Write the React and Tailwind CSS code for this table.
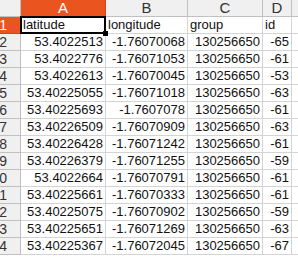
import React from 'react';

const rows = [
    ['53.4022513', '-1.76070068', '130256650', '-65'],
    ['53.4022776', '-1.76071053', '130256650', '-61'],
    ['53.4022613', '-1.76070045', '130256650', '-53'],
    ['53.40225055', '-1.76071018', '130256650', '-63'],
    ['53.40225693', '-1.7607078', '130256650', '-61'],
    ['53.40226509', '-1.76070909', '130256650', '-63'],
    ['53.40226428', '-1.76071242', '130256650', '-61'],
    ['53.40226379', '-1.76071255', '130256650', '-59'],
    ['53.4022664', '-1.76070791', '130256650', '-61'],
    ['53.40225661', '-1.76070333', '130256650', '-61'],
    ['53.40225075', '-1.76070902', '130256650', '-59'],
    ['53.40225651', '-1.76071269', '130256650', '-63'],
    ['53.40225367', '-1.76072045', '130256650', '-67'],
];

const widths = ['w-[85px]', 'w-[82px]', 'w-[75px]', 'w-[29px]'];

const RowHeader = ({ n, active }) => (
    <div className={`w-[21px] shrink-0 h-full overflow-hidden flex justify-end items-center pr-[13px] border-r border-b ${active ? 'bg-[#e9541f] text-white border-[#c94a1b]' : 'bg-[#f0f0f0] text-[#333] border-[#c0c0c0]'}`}>
        <span className="text-[14px] leading-none">{n}</span>
    </div>
);

const App = () => {
    return (
        <div className="w-[298px] h-[258px] overflow-hidden bg-white text-[13px] text-[#111]" style={{ fontFamily: '"Liberation Sans", Arial, sans-serif' }}>
            {/* column headers */}
            <div className="flex h-[17px]">
                <div className="w-[21px] shrink-0 bg-[#f0f0f0] border-r border-b border-[#c0c0c0]" />
                {['A', 'B', 'C', 'D'].map((c, i) => (
                    <div
                        key={c}
                        className={`${widths[i]} shrink-0 flex items-center justify-center border-r border-b text-[15px] ${i === 0 ? 'bg-[#e9541f] text-white border-[#c94a1b]' : 'bg-[#f0f0f0] text-[#333] border-[#c0c0c0]'}`}
                    >
                        {c}
                    </div>
                ))}
                <div className="flex-1 bg-[#f0f0f0] border-b border-[#c0c0c0]" />
            </div>

            {/* row 1: labels */}
            <div className="flex h-[17px]">
                <RowHeader n="1" active />
                <div className="w-[85px] shrink-0 relative border-r border-b border-[#d4d4d4] flex items-center pl-[2px]">
                    latitude
                    <div className="absolute -left-px -top-px -right-px -bottom-px border-2 border-black" />
                    <div className="absolute -right-[3px] -bottom-[3px] w-[5px] h-[5px] bg-black" />
                </div>
                {['longitude', 'group', 'id'].map((t, i) => (
                    <div key={t} className={`${widths[i + 1]} shrink-0 border-r border-b border-[#d4d4d4] flex items-center pl-[2px] overflow-hidden whitespace-nowrap`}>
                        {t}
                    </div>
                ))}
                <div className="flex-1 border-b border-[#d4d4d4]" />
            </div>

            {rows.map((r, ri) => (
                <div key={ri} className="flex h-[17px]">
                    <RowHeader n={ri + 2} />
                    {r.map((v, i) => (
                        <div key={i} className={`${widths[i]} shrink-0 border-r border-b border-[#d4d4d4] flex items-center justify-end pr-[2px] overflow-hidden whitespace-nowrap`}>
                            {v}
                        </div>
                    ))}
                    <div className="flex-1 border-b border-[#d4d4d4]" />
                </div>
            ))}
        </div>
    );
};

export default App;
